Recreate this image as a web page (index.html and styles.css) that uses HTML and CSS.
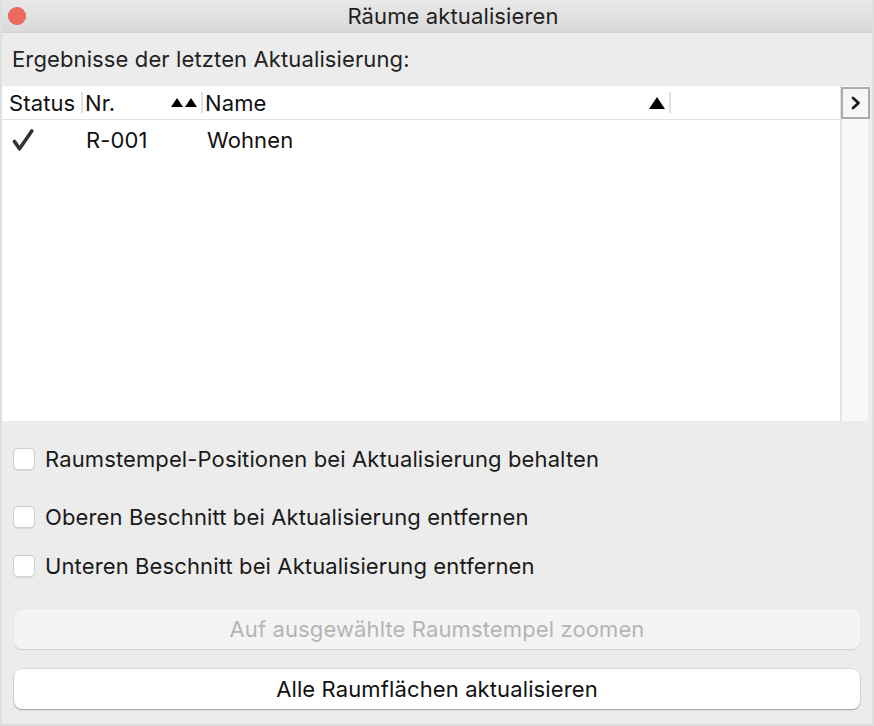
FILE: index.html
```html
<!DOCTYPE html>
<html lang="de">
<head>
<meta charset="utf-8">
<title>Räume aktualisieren</title>
<link rel="stylesheet" href="styles.css">
</head>
<body>
<div class="window">
  <div class="titlebar">
    <span class="close"></span>
    <span class="title">Räume aktualisieren</span>
  </div>
  <div class="caption">Ergebnisse der letzten Aktualisierung:</div>
  <div class="table">
    <div class="grid">
      <div class="thead">
        <div class="th c1">Status</div>
        <span class="sep"></span>
        <div class="th c2"><span>Nr.</span>
          <svg class="sort2" width="26" height="9" viewBox="0 0 26 9"><polygon points="0,9 6,0 12,9" /><polygon points="14,9 20,0 26,9" /></svg>
        </div>
        <span class="sep"></span>
        <div class="th c3"><span>Name</span>
          <svg class="sort1" width="16" height="12" viewBox="0 0 16 12"><polygon points="0,12 8,0 16,12" /></svg>
        </div>
        <span class="sep"></span>
        <div class="th c4"></div>
      </div>
      <div class="row">
        <div class="td r1">
          <svg width="22" height="22" viewBox="0 0 22 22"><path d="M2.5 12.5 L7.5 19.8 L19.8 2" fill="none" stroke="#2f3338" stroke-width="3.6" stroke-linecap="round" stroke-linejoin="round"/></svg>
        </div>
        <div class="td r2">R-001</div>
        <div class="td r3">Wohnen</div>
      </div>
    </div>
    <div class="scroll">
      <div class="more">
        <svg width="12" height="14" viewBox="0 0 12 14"><path d="M3 2 L8.5 7 L3 12" fill="none" stroke="#1a1a1a" stroke-width="2.8" stroke-linecap="round" stroke-linejoin="round"/></svg>
      </div>
    </div>
  </div>
  <div class="options">
    <label class="opt o1"><span class="box"></span>Raumstempel-Positionen bei Aktualisierung behalten</label>
    <label class="opt o2"><span class="box"></span>Oberen Beschnitt bei Aktualisierung entfernen</label>
    <label class="opt o3"><span class="box"></span>Unteren Beschnitt bei Aktualisierung entfernen</label>
  </div>
  <div class="buttons">
    <div class="btn disabled">Auf ausgewählte Raumstempel zoomen</div>
    <div class="btn primary">Alle Raumflächen aktualisieren</div>
  </div>
</div>
</body>
</html>
```

FILE: styles.css
```css
* { box-sizing: border-box; }
html, body { margin: 0; padding: 0; }
body {
  width: 874px;
  height: 726px;
  font-family: Inter, "Liberation Sans", sans-serif;
  font-size: 22px;
  letter-spacing: 0.12px;
  color: #1c1c1c;
  background: #dcdcdc;
  overflow: hidden;
}
.window {
  width: 874px;
  height: 726px;
  background: #ececec;
  border-left: 2px solid #dfdfdf;
  border-right: 2px solid #dfdfdf;
  border-bottom: 2px solid #dcdcdc;
  display: flex;
  flex-direction: column;
}
.titlebar {
  height: 33px;
  flex: none;
  display: flex;
  align-items: center;
  justify-content: center;
  padding-left: 32px;
  background: linear-gradient(#e9e9e9, #d9d9d9);
  border-bottom: 1px solid #d2d2d2;
  position: relative;
}
.close {
  position: absolute;
  left: 6px;
  top: 7px;
  width: 18px;
  height: 18px;
  border-radius: 50%;
  background: #ee6a5e;
  box-shadow: inset 0 0 0 0.5px rgba(0,0,0,0.12);
}
.title {
  font-size: 22px;
  color: #222;
}
.caption {
  height: 53px;
  flex: none;
  display: flex;
  align-items: center;
  padding-left: 10px;
  padding-bottom: 2px;
  color: #222;
}
.table {
  height: 335px;
  flex: none;
  display: flex;
  margin-right: 4px;
}
.grid {
  flex: 1;
  background: #fff;
  display: flex;
  flex-direction: column;
}
.thead {
  height: 34px;
  display: flex;
  align-items: center;
  border-bottom: 1px solid #e2e2e2;
}
.sep {
  width: 2px;
  height: 21px;
  background: #e0e0e0;
  flex: none;
}
.th {
  height: 100%;
  display: flex;
  align-items: center;
  justify-content: space-between;
  color: #111;
}
.th.c1 { width: 79px; padding-left: 7px; }
.th.c2 { width: 118px; padding-left: 2px; padding-right: 4px; }
.th.c3 { width: 466px; padding-left: 2px; padding-right: 4px; }
.th.c4 { flex: 1; }
.sort2, .sort1 { fill: #000; }
.row {
  height: 40px;
  display: flex;
  align-items: center;
}
.td { display: flex; align-items: center; color: #111; }
.td.r1 { width: 79px; padding-left: 10px; }
.td.r2 { width: 120px; padding-left: 5px; }
.td.r3 { width: 468px; padding-left: 6px; }
.scroll {
  width: 28px;
  flex: none;
  background: #f8f8f8;
  border-left: 2px solid #e4e4e4;
  padding-top: 1px;
}
.more {
  width: 29px;
  height: 32px;
  margin-left: -1px;
  border: 2px solid #ababab;
  background: #f6f6f6;
  display: flex;
  align-items: center;
  justify-content: center;
}
.options {
  flex: none;
  display: flex;
  flex-direction: column;
  padding-left: 11px;
  padding-top: 27px;
}
.opt {
  height: 22px;
  display: flex;
  align-items: center;
  gap: 10px;
  color: #1a1a1a;
}
.o2 { margin-top: 36px; }
.o3 { margin-top: 27px; }
.box {
  width: 22px;
  height: 22px;
  border-radius: 5px;
  background: #fff;
  border: 1px solid #cfcfcf;
  box-shadow: 0 0.5px 1px rgba(0,0,0,0.08);
  flex: none;
}
.buttons {
  flex: none;
  display: flex;
  flex-direction: column;
  padding: 32px 12px 0 12px;
  gap: 20px;
}
.btn {
  height: 40px;
  border-radius: 8px;
  display: flex;
  align-items: center;
  justify-content: center;
}
.btn.disabled {
  background: #f4f4f4;
  color: #b4b4b4;
  box-shadow: 0 0.5px 1px rgba(0,0,0,0.12);
}
.btn.primary {
  background: #fff;
  color: #111;
  box-shadow: 0 0 0 0.5px rgba(0,0,0,0.12), 0 1px 1.5px rgba(0,0,0,0.3);
}
```
